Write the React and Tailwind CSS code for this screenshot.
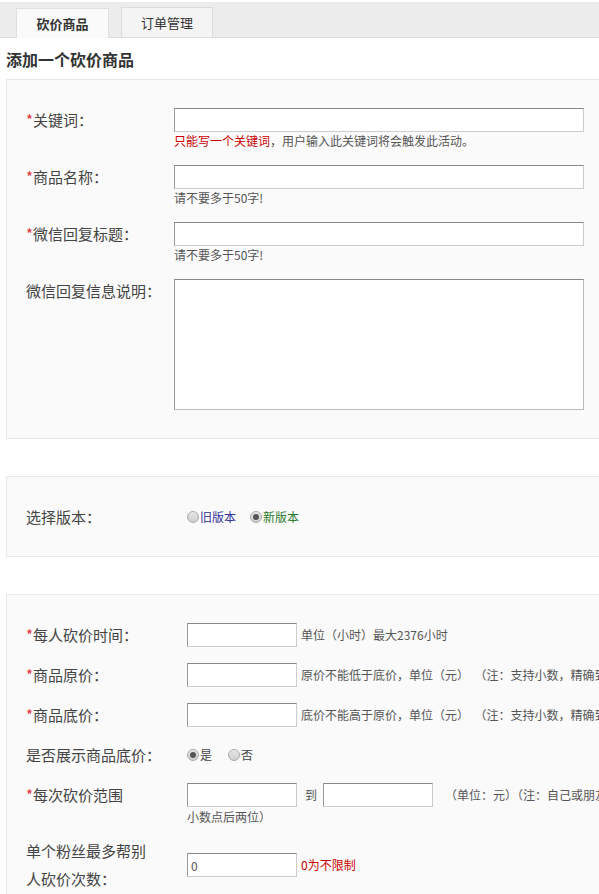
import React from "react";

const font = { fontFamily: '"Noto Sans CJK SC", "Noto Sans", sans-serif' };

const Star = () => <span className="text-[#d33]">*</span>;

const Radio = ({ checked }) => (
  <span className="inline-flex items-center justify-center w-[12px] h-[12px] rounded-full border border-[#aaa] bg-gradient-to-b from-[#e6e6e6] to-[#cfcfcf] mr-[1px] align-[-1px]">
    {checked && <span className="w-[6px] h-[6px] rounded-full bg-[#555]" />}
  </span>
);

const TopRow = ({ label, required, hint, textarea }) => (
  <div className="flex items-start mb-[15px]">
    <div className="w-[148px] shrink-0 text-[15px] leading-[24px] text-[#444]">
      {required && <Star />}
      {label}
    </div>
    <div className="flex flex-col">
      {textarea ? (
        <textarea className="w-[410px] h-[131px] bg-white border border-[#bbb] border-t-[#888] border-l-[#999] resize-none" />
      ) : (
        <input className="w-[410px] h-[24px] bg-white border border-[#ccc] border-t-[#888] border-l-[#999]" />
      )}
      {hint && <div className="text-[12px] leading-[18px] text-[#555]">{hint}</div>}
    </div>
  </div>
);

const SmallInput = ({ value }) => (
  <input
    defaultValue={value}
    className="w-[110px] h-[24px] bg-white border border-[#ccc] border-t-[#888] border-l-[#999] px-[3px] text-[12px] text-[#555]"
  />
);

const PriceRow = ({ label, required, children }) => (
  <div className="flex items-center h-[40px]">
    <div className="w-[161px] shrink-0 text-[15px] text-[#444]">
      {required && <Star />}
      {label}
    </div>
    {children}
  </div>
);

export default function App() {
  return (
    <div className="w-full overflow-hidden bg-white" style={font}>
      <div className="w-[720px]">
        <div className="mt-[2px] h-[36px] bg-[#ececec] border-b border-[#dcdcdc] flex items-end pl-[16px] gap-[12px]">
          <div className="w-[93px] h-[30px] bg-[#fafafa] border border-b-0 border-[#e0e0e0] flex items-center justify-center text-[13px] font-bold text-[#333] -mb-[1px]">
            砍价商品
          </div>
          <div className="w-[92px] h-[30px] bg-[#f4f4f4] border border-b-0 border-[#dcdcdc] flex items-center justify-center text-[13px] text-[#333]">
            订单管理
          </div>
        </div>

        <div className="h-[41px] flex items-center pl-[6px] text-[16px] font-bold text-[#333]">
          添加一个砍价商品
        </div>

        <div className="ml-[6px] bg-[#fafafa] border border-[#e8e8e8] pl-[19px] pt-[28px] pb-[13px]">
          <TopRow
            label="关键词："
            required
            hint={
              <>
                <span className="text-[#c00]">只能写一个关键词</span>，用户输入此关键词将会触发此活动。
              </>
            }
          />
          <TopRow label="商品名称：" required hint="请不要多于50字!" />
          <TopRow label="微信回复标题：" required hint="请不要多于50字!" />
          <TopRow label="微信回复信息说明：" textarea />
        </div>

        <div className="mt-[37px] ml-[6px] h-[81px] bg-[#fafafa] border border-[#e8e8e8] pl-[19px] flex items-center">
          <div className="w-[161px] text-[15px] text-[#444] pt-[2px]">选择版本：</div>
          <div className="flex items-center text-[12px] gap-[14px]">
            <label className="flex items-center">
              <Radio />
              <span className="text-[#33339a]">旧版本</span>
            </label>
            <label className="flex items-center">
              <Radio checked />
              <span className="text-[#2a7a2a]">新版本</span>
            </label>
          </div>
        </div>

        <div className="mt-[37px] ml-[6px] bg-[#fafafa] border border-[#e8e8e8] pl-[19px] pt-[20px] pb-[20px]">
          <PriceRow label="每人砍价时间：" required>
            <SmallInput />
            <span className="ml-[4px] text-[12px] text-[#555]">单位（小时）最大2376小时</span>
          </PriceRow>
          <PriceRow label="商品原价：" required>
            <SmallInput />
            <span className="ml-[4px] text-[12px] text-[#555] whitespace-nowrap">
              原价不能低于底价，单位（元）&nbsp;&nbsp;（注：支持小数，精确到小数点后两位）
            </span>
          </PriceRow>
          <PriceRow label="商品底价：" required>
            <SmallInput />
            <span className="ml-[4px] text-[12px] text-[#555] whitespace-nowrap">
              底价不能高于原价，单位（元）&nbsp;&nbsp;（注：支持小数，精确到小数点后两位）
            </span>
          </PriceRow>
          <PriceRow label="是否展示商品底价：">
            <div className="flex items-center text-[12px] text-[#444] gap-[16px]">
              <label className="flex items-center">
                <Radio checked />
                <span>是</span>
              </label>
              <label className="flex items-center">
                <Radio />
                <span>否</span>
              </label>
            </div>
          </PriceRow>
          <div className="flex items-start pt-[8px]">
            <div className="w-[161px] shrink-0 text-[15px] text-[#444] leading-[24px]">
              <Star />
              每次砍价范围
            </div>
            <div className="flex flex-col text-[12px] text-[#555]">
              <div className="flex items-center whitespace-nowrap">
                <SmallInput />
                <span className="ml-[8px] mr-[6px]">到</span>
                <SmallInput />
                <span className="ml-[12px]">（单位：元）（注：自己或朋友每次砍价的金额范围，支持小数，精确到</span>
              </div>
              <div className="leading-[20px]">小数点后两位）</div>
            </div>
          </div>
          <div className="flex items-center mt-[10px]">
            <div className="w-[161px] shrink-0 text-[15px] text-[#444] leading-[28px]">
              <div className="w-[126px]">单个粉丝最多帮别人砍价次数：</div>
            </div>
            <SmallInput value="0" />
            <span className="ml-[4px] text-[12px] text-[#c00]">0为不限制</span>
          </div>
        </div>
      </div>
    </div>
  );
}
